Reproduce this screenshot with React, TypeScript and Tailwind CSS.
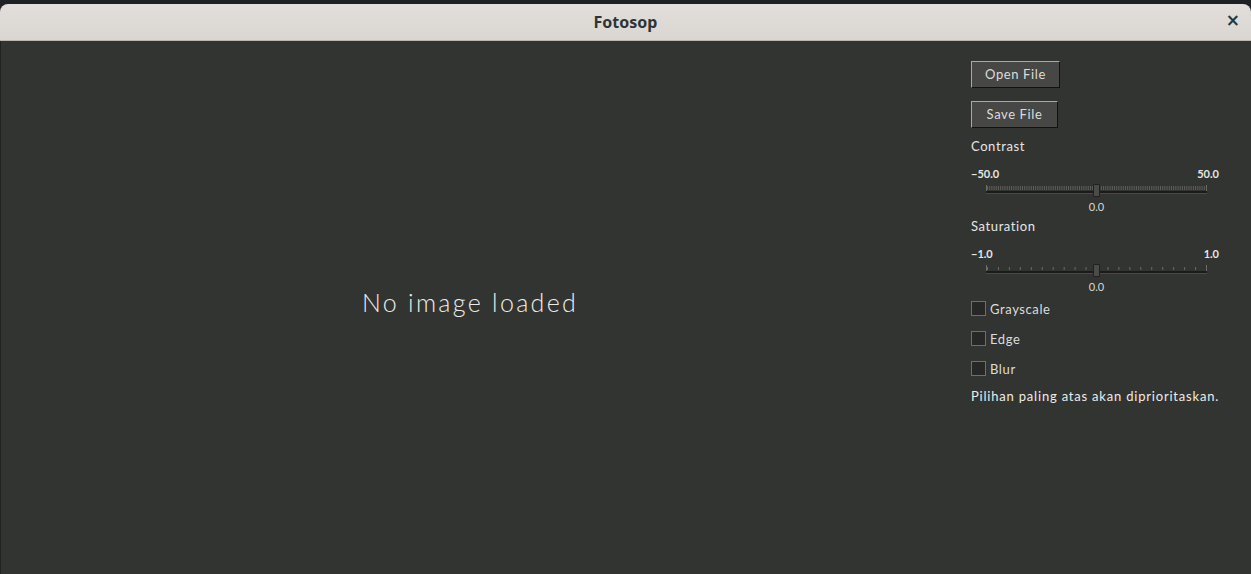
import React from 'react'

const uiFont = { fontFamily: 'Lato, "Open Sans", sans-serif' }

function Ticks({ count, dense }: { count: number; dense?: boolean }) {
  const w = 220
  const lines = []
  for (let i = 0; i <= count; i++) {
    const x = 0.5 + (i * (w - 1)) / count
    lines.push(<line key={i} x1={x} y1={dense ? 1 : 2} x2={x} y2={5} stroke="#6b6b69" strokeWidth={dense ? 0.8 : 1} />)
  }
  return (
    <svg width={w} height={6} className="block">
      {lines}
    </svg>
  )
}

function Slider({ min, max, count, dense }: { min: string; max: string; count: number; dense?: boolean }) {
  return (
    <div className="relative h-[45px] w-[248px]">
      <div className="flex h-[11px] justify-between text-[11px] leading-[11px] font-bold text-[#e6e6e4]">
        <span>{min}</span>
        <span>{max}</span>
      </div>
      <div className="mt-[6px] ml-[15px] w-[221px]">
        <div className="border-l border-r border-[#6b6b69]">
          <Ticks count={count} dense={dense} />
        </div>
        <div className="h-[3px] bg-[#1b1b1a] border-b border-[#4a4a48]" />
      </div>
      <div className="absolute left-[122px] top-[16px] h-[13px] w-[7px] rounded-[1px] border border-[#202020] bg-[#4b4b49]" />
      <div className="absolute left-0 top-[33px] w-[250px] pl-[1px] text-center text-[11px] leading-[11px] text-[#d8d8d6]">0.0</div>
    </div>
  )
}

function Btn({ label, w }: { label: string; w: string }) {
  return (
    <button
      type="button"
      className={`${w} h-[27px] border border-t-[#a9a9a7] border-l-[#a9a9a7] border-b-[#121212] border-r-[#121212] bg-[#474746] text-[13px] tracking-[0.6px] text-[#dcdcda]`}
    >
      {label}
    </button>
  )
}

function Check({ label }: { label: string }) {
  return (
    <div className="flex h-[15px] items-center gap-[4px]">
      <div className="h-[15px] w-[15px] border border-[#6e6e6c] bg-[#272726]" />
      <span className="text-[13px] leading-[16px] tracking-[0.6px] text-[#dcdcda]">{label}</span>
    </div>
  )
}

export default function App() {
  return (
    <div className="h-[574px] w-[1251px] overflow-hidden bg-[#1f2024]" style={uiFont}>
      <div className="mt-[4px] flex h-[570px] flex-col">
        <header className="relative flex h-[37px] items-center justify-center rounded-t-[8px] border-b border-[#bcb5ad] bg-gradient-to-b from-[#e1dedb] to-[#dad7d2]">
          <span className="text-[16px] font-bold text-[#2e3436]" style={{ fontFamily: '"Noto Sans", "DejaVu Sans", sans-serif' }}>
            Fotosop
          </span>
          <span className="absolute right-[11px] top-[8px] text-[17px] font-bold leading-none text-[#2e3436]" style={{ fontFamily: '"DejaVu Sans", sans-serif' }}>
            ×
          </span>
        </header>
        <main className="grid flex-1 grid-cols-[938px_1fr] border-l border-[#222] bg-[#323431]">
          <div className="flex items-center justify-center pb-[9px]">
            <span className="text-[25px] font-light tracking-[2.3px] text-[#ececea]">No image loaded</span>
          </div>
          <aside className="flex flex-col pl-[32px] pt-[20px]">
            <Btn label="Open File" w="w-[89px]" />
            <div className="mt-[13px]">
              <Btn label="Save File" w="w-[87px]" />
            </div>
            <div className="mt-[10px] text-[13px] leading-[16px] tracking-[0.6px] text-[#e6e6e4]">Contrast</div>
            <div className="mt-[14px]">
              <Slider min="−50.0" max="50.0" count={100} dense />
            </div>
            <div className="mt-[5px] text-[13px] leading-[16px] tracking-[0.6px] text-[#e6e6e4]">Saturation</div>
            <div className="mt-[14px]">
              <Slider min="−1.0" max="1.0" count={20} />
            </div>
            <div className="mt-[8px] flex flex-col gap-[15px]">
              <Check label="Grayscale" />
              <Check label="Edge" />
              <Check label="Blur" />
            </div>
            <div className="mt-[12px] text-[13px] leading-[16px] tracking-[0.8px] text-[#ececea]">Pilihan paling atas akan diprioritaskan.</div>
          </aside>
        </main>
      </div>
    </div>
  )
}
